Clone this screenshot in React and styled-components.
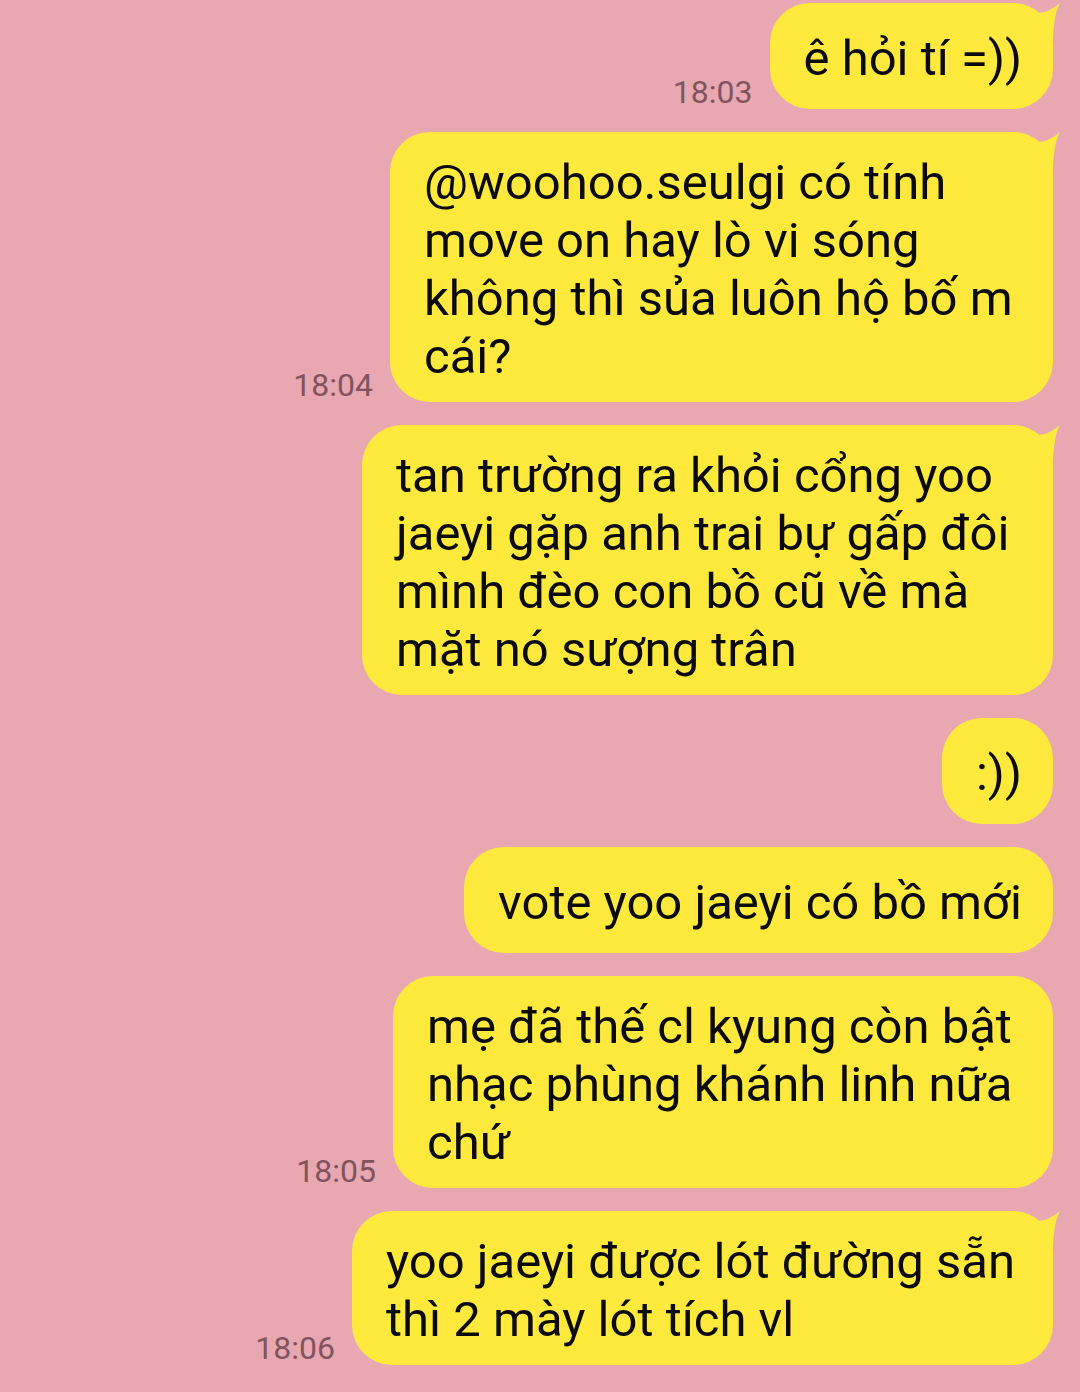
import React from "react";
import styled, { createGlobalStyle } from "styled-components";

const messages = [
  { time: "18:03", tail: true, lines: ["ê hỏi tí =))"] },
  {
    time: "18:04",
    tail: true,
    width: 663,
    lines: ["@woohoo.seulgi có tính", "move on hay lò vi sóng", "không thì sủa luôn hộ bố m", "cái?"],
  },
  {
    tail: true,
    width: 691,
    lines: ["tan trường ra khỏi cổng yoo", "jaeyi gặp anh trai bự gấp đôi", "mình đèo con bồ cũ về mà", "mặt nó sượng trân"],
  },
  { lines: [":))"] },
  { lines: ["vote yoo jaeyi có bồ mới"] },
  {
    time: "18:05",
    width: 660,
    lines: ["mẹ đã thế cl kyung còn bật", "nhạc phùng khánh linh nữa", "chứ"],
  },
  {
    time: "18:06",
    tail: true,
    width: 701,
    lines: ["yoo jaeyi được lót đường sẵn", "thì 2 mày lót tích vl"],
  },
];

const App = () => {
  return (
    <>
      <GlobalStyle />
      <Chat>
        {messages.map((m, i) => (
          <Row key={i}>
            {m.time && <Time>{m.time}</Time>}
            <Bubble $width={m.width}>
              {m.tail && (
                <Tail viewBox="0 0 32 36" width="32" height="36">
                  <path d="M6 10 Q19 10 30 0 Q24 10 23 36 L6 36 Z" fill="#fee93c" />
                </Tail>
              )}
              {m.lines.map((line, j) => (
                <Line key={j}>{line}</Line>
              ))}
            </Bubble>
          </Row>
        ))}
      </Chat>
    </>
  );
};

export default App;

const GlobalStyle = createGlobalStyle`
  body {
    margin: 0;
    background: #e9a8b1;
    font-family: Roboto, "Noto Sans", sans-serif;
  }
`;

const Chat = styled.div`
  min-height: 1392px;
  box-sizing: border-box;
  padding: 3px 27px 0 0;
  display: flex;
  flex-direction: column;
  gap: 23px;
`;

const Row = styled.div`
  display: flex;
  justify-content: flex-end;
  align-items: flex-end;
  gap: 17px;
`;

const Time = styled.div`
  font-size: 32px;
  line-height: 32px;
  color: #82535e;
  margin-bottom: 1px;
`;

const Bubble = styled.div`
  position: relative;
  box-sizing: border-box;
  width: ${(p) => (p.$width ? `${p.$width}px` : "auto")};
  min-height: 106px;
  padding: 22px 31px 16px 34px;
  display: flex;
  flex-direction: column;
  justify-content: center;
  background: #fee93c;
  border-radius: 40px;
  color: #0a0a0a;
  font-size: 49px;
  line-height: 58px;
`;

const Line = styled.div`
  white-space: nowrap;
`;

const Tail = styled.svg`
  position: absolute;
  top: 0;
  right: -9px;
`;
